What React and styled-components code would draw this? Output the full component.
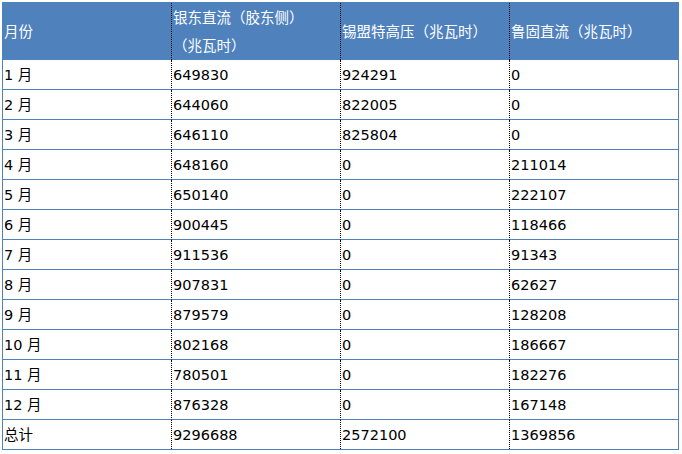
import React from "react";
import styled, { createGlobalStyle } from "styled-components";

const Global = createGlobalStyle`
  html, body { margin: 0; padding: 0; background: #ffffff; }
  body { font-family: "DejaVu Sans", "Noto Sans CJK SC", sans-serif; }
`;

const Page = styled.div`
  padding: 2px 0 0 2px;
`;

const Table = styled.table`
  border-collapse: separate;
  border-spacing: 0;
  table-layout: fixed;
  width: 677px;
  border: 1px solid #4f81bd;
  font-family: "DejaVu Sans", "Noto Sans CJK SC", sans-serif;
  font-size: 14.5px;
  color: #000;
  text-spacing-trim: space-all;
`;

const Col = styled.col`
  width: ${(p) => p.$w}px;
`;

const Head = styled.th`
  background: #4f81bd;
  color: #ffffff;
  font-weight: normal;
  text-align: left;
  vertical-align: middle;
  height: 57px;
  padding: 2px 1px 0 1px;
  line-height: 27.5px;
  box-sizing: border-box;
  white-space: nowrap;
  border-left: ${(p) => (p.$first ? "none" : "1px dotted #000")};
`;

const Cell = styled.td`
  height: ${(p) => (p.$last ? 29 : 30)}px;
  box-sizing: border-box;
  padding: 1px 1px 0 1px;
  line-height: 20px;
  vertical-align: middle;
  white-space: nowrap;
  border-left: ${(p) => (p.$first ? "none" : "1px dotted #000")};
  border-bottom: ${(p) => (p.$last ? "none" : "1px solid #4f81bd")};
`;

const rows = [
  ["1 月", "649830", "924291", "0"],
  ["2 月", "644060", "822005", "0"],
  ["3 月", "646110", "825804", "0"],
  ["4 月", "648160", "0", "211014"],
  ["5 月", "650140", "0", "222107"],
  ["6 月", "900445", "0", "118466"],
  ["7 月", "911536", "0", "91343"],
  ["8 月", "907831", "0", "62627"],
  ["9 月", "879579", "0", "128208"],
  ["10 月", "802168", "0", "186667"],
  ["11 月", "780501", "0", "182276"],
  ["12 月", "876328", "0", "167148"],
  ["总计", "9296688", "2572100", "1369856"],
];

export default function App() {
  return (
    <Page>
      <Global />
      <Table>
        <colgroup>
          <Col $w={168} />
          <Col $w={169} />
          <Col $w={169} />
          <Col $w={169} />
        </colgroup>
        <thead>
          <tr>
            <Head $first>月份</Head>
            <Head>
              银东直流（胶东侧）
              <br />
              （兆瓦时）
            </Head>
            <Head>锡盟特高压（兆瓦时）</Head>
            <Head>鲁固直流（兆瓦时）</Head>
          </tr>
        </thead>
        <tbody>
          {rows.map((r, i) => (
            <tr key={i}>
              {r.map((c, j) => (
                <Cell key={j} $first={j === 0} $last={i === rows.length - 1}>
                  {c}
                </Cell>
              ))}
            </tr>
          ))}
        </tbody>
      </Table>
    </Page>
  );
}
